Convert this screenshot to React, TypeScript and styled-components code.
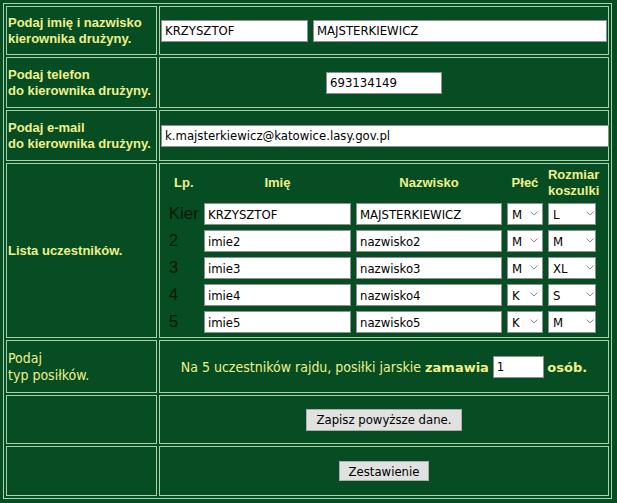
import React from "react";
import styled, { createGlobalStyle } from "styled-components";

const BG = "#074d23";
const LINE = "#a9d2a9";
const YELLOW = "#f0f08a";
const ARIAL = `"Liberation Sans", Arial, sans-serif`;
const TAHOMA = `"DejaVu Sans Condensed", "DejaVu Sans", sans-serif`;
const VERDANA = `"DejaVu Sans", sans-serif`;

const Global = createGlobalStyle`
  html, body { margin: 0; padding: 0; background: ${BG}; }
  body { font-family: ${TAHOMA}; font-size: 13px; }
`;

const Frame = styled.table`
  margin: 3px 0 0 3px;
  width: 609px;
  table-layout: fixed;
  border: 1px solid ${LINE};
  border-collapse: separate;
  border-spacing: 2px;
  background: ${BG};
`;

const Row = styled.tr<{ $h?: number }>`
  height: ${(p) => (p.$h ? `${p.$h}px` : "auto")};
`;

const LabelCell = styled.td`
  box-sizing: border-box;
  width: 151px;
  border: 1px solid ${LINE};
  padding: 1px;
  vertical-align: middle;
  color: ${YELLOW};
  font-family: ${ARIAL};
  font-weight: bold;
  font-size: 13px;
  line-height: 16px;
  white-space: nowrap;
`;

const PlainLabelCell = styled(LabelCell)`
  font-family: ${TAHOMA};
  font-weight: normal;
  font-size: 14px;
  line-height: 17px;
`;

const ValueCell = styled.td<{ $center?: boolean; $flush?: boolean }>`
  box-sizing: border-box;
  border: 1px solid ${LINE};
  padding: ${(p) => (p.$flush ? "0" : "1px")};
  vertical-align: middle;
  text-align: ${(p) => (p.$center ? "center" : "left")};
  white-space: nowrap;
`;

const TextInput = styled.input<{ $w: number; $block?: boolean }>`
  box-sizing: border-box;
  display: ${(p) => (p.$block ? "block" : "inline-block")};
  width: ${(p) => p.$w}px;
  height: 22px;
  margin: 0;
  padding: 0 3px;
  border: 1px solid #8f8f8f;
  background: #fff;
  color: #000;
  font-family: ${TAHOMA};
  font-size: 13px;
  vertical-align: middle;
  outline: none;
`;

const PairRow = styled.div`
  display: flex;
  gap: 5px;
`;

const Crew = styled.table`
  margin: 0 auto;
  border-collapse: separate;
  border-spacing: 3px;
`;

const HeadCell = styled.th`
  padding: 0 1px;
  height: 32px;
  color: ${YELLOW};
  font-family: ${ARIAL};
  font-weight: bold;
  font-size: 13px;
  line-height: 16px;
  text-align: center;
  vertical-align: middle;
`;

const CrewCell = styled.td`
  padding: 1px;
  height: 22px;
  vertical-align: middle;
  white-space: nowrap;
`;

const Lp = styled(CrewCell)`
  width: 30px;
  color: #021a06;
  font-family: ${ARIAL};
  font-size: 17px;
  line-height: 20px;
`;

const SelectWrap = styled.div`
  position: relative;
  height: 22px;
`;

const Select = styled.select<{ $w: number }>`
  box-sizing: border-box;
  appearance: none;
  -webkit-appearance: none;
  display: block;
  width: ${(p) => p.$w}px;
  height: 22px;
  margin: 0;
  padding: 0 0 0 4px;
  border: 1px solid #8f8f8f;
  border-radius: 0;
  background: #fff;
  color: #000;
  font-family: ${TAHOMA};
  font-size: 13px;
  outline: none;
`;

const Chevron = styled.svg`
  position: absolute;
  right: 5px;
  top: 8px;
  pointer-events: none;
`;

const Meal = styled.span`
  color: ${YELLOW};
  font-family: ${TAHOMA};
  font-size: 14px;
  vertical-align: middle;
`;

const Strong = styled.b`
  color: ${YELLOW};
  font-family: ${VERDANA};
  font-size: 13px;
  font-weight: bold;
  vertical-align: middle;
`;

const Button = styled.button<{ $h: number }>`
  box-sizing: border-box;
  height: ${(p) => p.$h}px;
  margin: 0;
  padding: 0 9px;
  border: 1px solid #adadad;
  border-radius: 0;
  background: #e1e1e1;
  color: #000;
  font-family: ${TAHOMA};
  font-size: 13px;
  vertical-align: middle;
`;

type Member = { lp: string; imie: string; nazwisko: string; plec: string; size: string };

const members: Member[] = [
  { lp: "Kier", imie: "KRZYSZTOF", nazwisko: "MAJSTERKIEWICZ", plec: "M", size: "L" },
  { lp: "2", imie: "imie2", nazwisko: "nazwisko2", plec: "M", size: "M" },
  { lp: "3", imie: "imie3", nazwisko: "nazwisko3", plec: "M", size: "XL" },
  { lp: "4", imie: "imie4", nazwisko: "nazwisko4", plec: "K", size: "S" },
  { lp: "5", imie: "imie5", nazwisko: "nazwisko5", plec: "K", size: "M" },
];

const Drop = ({ w, value, options }: { w: number; value: string; options: string[] }) => (
  <SelectWrap>
    <Select $w={w} defaultValue={value}>
      {options.map((o) => (
        <option key={o} value={o}>
          {o}
        </option>
      ))}
    </Select>
    <Chevron width="8" height="5" viewBox="0 0 8 5">
      <polyline points="0.5,0.5 4,4 7.5,0.5" fill="none" stroke="#8a8a8a" strokeWidth="1" />
    </Chevron>
  </SelectWrap>
);

export default function App() {
  return (
    <>
      <Global />
      <Frame>
        <tbody>
          <Row $h={49}>
            <LabelCell>
              Podaj imię i nazwisko
              <br />
              kierownika drużyny.
            </LabelCell>
            <ValueCell>
              <PairRow>
                <TextInput $w={147} defaultValue="KRZYSZTOF" />
                <TextInput $w={296} defaultValue="MAJSTERKIEWICZ" />
              </PairRow>
            </ValueCell>
          </Row>
          <Row $h={51}>
            <LabelCell>
              Podaj telefon
              <br />
              do kierownika drużyny.
            </LabelCell>
            <ValueCell $center>
              <TextInput $w={116} defaultValue="693134149" />
            </ValueCell>
          </Row>
          <Row $h={51}>
            <LabelCell>
              Podaj e-mail
              <br />
              do kierownika drużyny.
            </LabelCell>
            <ValueCell>
              <TextInput $w={448} defaultValue="k.majsterkiewicz@katowice.lasy.gov.pl" />
            </ValueCell>
          </Row>
          <Row $h={175}>
            <LabelCell>Lista uczestników.</LabelCell>
            <ValueCell $flush>
              <Crew>
                <tbody>
                  <tr>
                    <HeadCell>Lp.</HeadCell>
                    <HeadCell>Imię</HeadCell>
                    <HeadCell>Nazwisko</HeadCell>
                    <HeadCell>Płeć</HeadCell>
                    <HeadCell>
                      Rozmiar
                      <br />
                      koszulki
                    </HeadCell>
                  </tr>
                  {members.map((m) => (
                    <tr key={m.lp}>
                      <Lp>{m.lp}</Lp>
                      <CrewCell>
                        <TextInput $block $w={147} defaultValue={m.imie} />
                      </CrewCell>
                      <CrewCell>
                        <TextInput $block $w={146} defaultValue={m.nazwisko} />
                      </CrewCell>
                      <CrewCell>
                        <Drop w={36} value={m.plec} options={["M", "K"]} />
                      </CrewCell>
                      <CrewCell>
                        <Drop w={48} value={m.size} options={["S", "M", "L", "XL", "XXL"]} />
                      </CrewCell>
                    </tr>
                  ))}
                </tbody>
              </Crew>
            </ValueCell>
          </Row>
          <Row $h={53}>
            <PlainLabelCell>
              Podaj
              <br />
              typ posiłków.
            </PlainLabelCell>
            <ValueCell $center>
              <Meal>Na 5 uczestników rajdu, posiłki jarskie </Meal>
              <Strong>zamawia</Strong> <TextInput $w={51} defaultValue="1" />{" "}
              <Strong>osób.</Strong>
            </ValueCell>
          </Row>
          <Row $h={49}>
            <LabelCell />
            <ValueCell $center>
              <Button $h={22}>Zapisz powyższe dane.</Button>
            </ValueCell>
          </Row>
          <Row $h={50}>
            <LabelCell />
            <ValueCell $center>
              <Button $h={20}>Zestawienie</Button>
            </ValueCell>
          </Row>
        </tbody>
      </Frame>
    </>
  );
}
